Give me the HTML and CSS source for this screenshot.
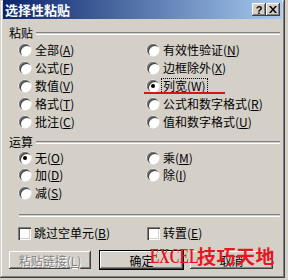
FILE: index.html
```html
<!DOCTYPE html>
<html lang="zh-CN">
<head>
  <meta charset="UTF-8">
  <title>选择性粘贴</title>
  <link rel="stylesheet" href="styles.css">
</head>
<body>

<div class="window">
  <div class="titlebar">
    <span class="title">选择性粘贴</span>
    <div class="title-btns">
      <span class="tbtn help">?</span>
      <span class="tbtn close">
        <svg width="8" height="7" viewBox="0 0 8 7"><path d="M0 0h2l2 2.5L6 0h2L5 3.5 8 7H6L4 4.5 2 7H0l3-3.5z" fill="#000"/></svg>
      </span>
    </div>
  </div>

  <div class="content">
    <div class="group-head"><span>粘贴</span><i class="etch"></i></div>
    <div class="opts paste">
      <div class="opt"><span class="radio"></span>全部(<u>A</u>)</div>
      <div class="opt"><span class="radio"></span>有效性验证(<u>N</u>)</div>
      <div class="opt"><span class="radio"></span>公式(<u>F</u>)</div>
      <div class="opt"><span class="radio"></span>边框除外(<u>X</u>)</div>
      <div class="opt"><span class="radio"></span>数值(<u>V</u>)</div>
      <div class="opt"><span class="radio checked"></span><span class="focus">列宽(<u>W</u>)</span></div>
      <div class="opt"><span class="radio"></span>格式(<u>T</u>)</div>
      <div class="opt"><span class="radio"></span>公式和数字格式(<u>R</u>)</div>
      <div class="opt"><span class="radio"></span>批注(<u>C</u>)</div>
      <div class="opt"><span class="radio"></span>值和数字格式(<u>U</u>)</div>
    </div>

    <div class="group-head op-head"><span>运算</span><i class="etch"></i></div>
    <div class="opts calc">
      <div class="opt"><span class="radio checked"></span>无(<u>O</u>)</div>
      <div class="opt"><span class="radio"></span>乘(<u>M</u>)</div>
      <div class="opt"><span class="radio"></span>加(<u>D</u>)</div>
      <div class="opt"><span class="radio"></span>除(<u>I</u>)</div>
      <div class="opt"><span class="radio"></span>减(<u>S</u>)</div>
    </div>

    <i class="etch sep"></i>

    <div class="opts checks">
      <div class="opt"><span class="check"></span>跳过空单元(<u>B</u>)</div>
      <div class="opt"><span class="check"></span>转置(<u>E</u>)</div>
    </div>

    <div class="buttons">
      <span class="btn disabled">粘贴链接(<u>L</u>)</span>
      <span class="btn default">确定</span>
      <span class="btn">取消</span>
    </div>
  </div>

  <i class="mark-line"></i>
  <div class="watermark"><span class="latin"><span class="squeeze">EXCEL</span></span>技巧天地</div>
</div>

</body>
</html>
```

FILE: styles.css
```css
    body {
      margin: 0;
      background: #d4d0c8;
      font-family: "Noto Sans CJK SC", "DejaVu Sans", sans-serif;
      font-size: 12px;
      color: #000;
    }

    .window {
      position: relative;
      width: 285px;
      height: 278px;
      box-sizing: border-box;
      padding: 0 3px 3px 3px;
      background: #d4d0c8;
      box-shadow: inset -1px -1px #404040, inset 1px 1px #d4d0c8, inset -2px -2px #808080, inset 2px 2px #fff;
    }

    .titlebar {
      height: 19px;
      display: flex;
      align-items: center;
      justify-content: space-between;
      background: linear-gradient(to right, #0a246a, #a6caf0);
      color: #fff;
    }

    .title {
      font-weight: bold;
      font-size: 13px;
      padding-left: 2px;
      line-height: 19px;
    }

    .title-btns {
      display: flex;
      padding-right: 2px;
    }

    .tbtn {
      width: 14px;
      height: 13px;
      display: flex;
      align-items: center;
      justify-content: center;
      background: #d4d0c8;
      color: #000;
      font-family: "Liberation Sans", sans-serif;
      font-weight: bold;
      font-size: 11px;
      box-shadow: inset -1px -1px #404040, inset 1px 1px #fff, inset -2px -2px #808080;
    }

    .content {
      padding: 7px 2px 0 6px;
    }

    .group-head {
      display: flex;
      align-items: center;
      height: 14px;
      line-height: 14px;
    }

    .group-head span {
      padding-right: 3px;
    }

    .etch {
      display: block;
      flex: 1;
      height: 1px;
      border-top: 1px solid #808080;
      border-bottom: 1px solid #fff;
      margin-top: 1px;
    }

    .opts {
      display: grid;
      grid-template-columns: 128px 1fr;
      margin-left: 10px;
    }

    .paste {
      margin-top: 0.5px;
      grid-auto-rows: 18px;
    }

    .op-head {
      margin-top: 4.5px;
    }

    .calc {
      grid-auto-rows: 17.5px;
    }

    .opt {
      display: flex;
      align-items: center;
      white-space: nowrap;
      line-height: 14px;
    }

    .opt u {
      text-decoration: underline;
    }

    .radio {
      position: relative;
      width: 12px;
      height: 12px;
      border-radius: 50%;
      background: #fff;
      margin-right: 4px;
      box-shadow: inset 1px 1px #808080, inset 2px 2px #404040, 0 0 0 0.5px #fff;
      flex: none;
    }

    .radio.checked::after {
      content: "";
      position: absolute;
      left: 4px;
      top: 4px;
      width: 4px;
      height: 4px;
      border-radius: 50%;
      background: #000;
    }

    .focus {
      outline: 1px dotted #000;
      padding: 0 1px;
      margin-left: -1px;
    }

    .sep {
      margin: 12.5px 0 0 10px;
    }

    .checks {
      margin-top: 7px;
      margin-left: 9px;
      grid-template-columns: 129px 1fr;
      grid-auto-rows: 18px;
    }

    .check {
      width: 13px;
      height: 13px;
      background: #fff;
      margin-right: 3px;
      flex: none;
      box-shadow: inset 1px 1px #808080, inset 2px 2px #404040, inset -1px -1px #fff, inset -2px -2px #d4d0c8;
    }

    .buttons {
      display: flex;
      margin-top: 9px;
    }

    .btn {
      width: 85px;
      height: 18px;
      box-sizing: border-box;
      display: flex;
      align-items: center;
      justify-content: center;
      background: #d4d0c8;
      box-shadow: inset -1px -1px #404040, inset 1px 1px #fff, inset -2px -2px #808080;
      margin-right: 7px;
    }

    .btn.disabled {
      width: 84px;
      margin-right: 9px;
      color: #808080;
      text-shadow: 1px 1px #fff;
    }

    .btn.default {
      box-shadow: 0 0 0 1px #000, inset -1px -1px #404040, inset 1px 1px #fff, inset -2px -2px #808080;
    }

    .mark-line {
      position: absolute;
      left: 144px;
      top: 92px;
      width: 81px;
      height: 2px;
      background: #e0101a;
    }

    .watermark {
      position: absolute;
      left: 150px;
      top: 245px;
      display: flex;
      align-items: center;
      color: #e8161e;
      font-weight: bold;
      font-size: 19px;
      line-height: 22px;
      letter-spacing: 0.5px;
      white-space: nowrap;
    }

    .watermark .latin {
      display: inline-block;
      width: 47px;
      overflow: visible;
      font-family: "Liberation Serif", serif;
      font-size: 20px;
      letter-spacing: 0;
    }

    .watermark .squeeze {
      display: inline-block;
      transform: scaleX(0.7);
      transform-origin: left center;
    }
```
